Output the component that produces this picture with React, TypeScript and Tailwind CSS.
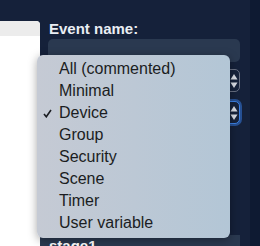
const eventFilters = ["All (commented)", "Minimal", "Device", "Group", "Security", "Scene", "Timer", "User variable"];

function UpDownArrows() {
  return (
    <svg width="8" height="16" viewBox="0 0 8 16" className="shrink-0">
      <path d="M0.5 6.5 L4 1 L7.5 6.5 Z" fill="#d9dde5" />
      <path d="M0.5 9.5 L7.5 9.5 L4 15 Z" fill="#d9dde5" />
    </svg>
  );
}

function SelectBox({ focused }: { focused?: boolean }) {
  return (
    <div
      className={
        focused
          ? "ml-[8px] flex h-[23px] shrink-0 items-center justify-end rounded-[5px] border border-[#3d82e6] bg-[#16223b] pr-[1px] shadow-[0_0_0_2px_rgba(52,120,220,0.55)]"
          : "ml-[8px] flex h-[23px] shrink-0 items-center justify-end rounded-[5px] border border-[#687083] bg-[#16223b] pr-[1px]"
      }
    >
      <UpDownArrows />
    </div>
  );
}

export default function App() {
  return (
    <div className="relative h-[246px] w-[260px] overflow-hidden bg-[#15213a] font-['Liberation_Sans',Arial,sans-serif]">
      <div className="flex h-full">
        {/* left panel */}
        <div className="mt-[21px] flex w-[40px] flex-col overflow-hidden rounded-tr-[4px] bg-white">
          <div className="h-[15px] shrink-0 bg-[#ececec]" />
        </div>

        {/* form column */}
        <div className="flex w-[210px] flex-col pr-[10px] pt-[21px]">
          <label className="shrink-0 pl-[9px] text-[15px] font-bold leading-[16px] text-[#e9edf3]">Event name:</label>
          <div className="ml-[8px] mt-[2px] h-[23px] shrink-0 rounded-[5px] bg-[#2a3950]" />
          <div className="mt-[7px] shrink-0">
            <SelectBox />
          </div>
          <div className="mt-[9px] shrink-0">
            <SelectBox focused />
          </div>
          <div className="mt-[111px] h-[40px] shrink-0 bg-[#2a3950] pl-[9px] pt-[3px] text-[15px] font-bold leading-[16px] text-white">
            stage1
          </div>
        </div>

        {/* right strip */}
        <div className="w-[10px] bg-[#0e1a32]" />
      </div>

      {/* open dropdown menu */}
      <div className="absolute left-[37px] top-[55px] h-[183px] w-[193px] rounded-[6px] bg-gradient-to-r from-[#c5cad4] to-[#b3c6d6] pt-[3px] shadow-[0_2px_10px_rgba(0,0,0,0.35)]">
        {eventFilters.map((item) => (
          <div key={item} className="relative h-[22px] pl-[22px] text-[16px] leading-[22px] text-[#1b1d22]">
            {item === "Device" && (
              <svg width="9" height="9" viewBox="0 0 9 9" className="absolute left-[6px] top-[7px]">
                <path d="M1 5 L3.3 7.8 L8 1" fill="none" stroke="#1b1d22" strokeWidth="1.6" />
              </svg>
            )}
            {item}
          </div>
        ))}
      </div>
    </div>
  );
}
